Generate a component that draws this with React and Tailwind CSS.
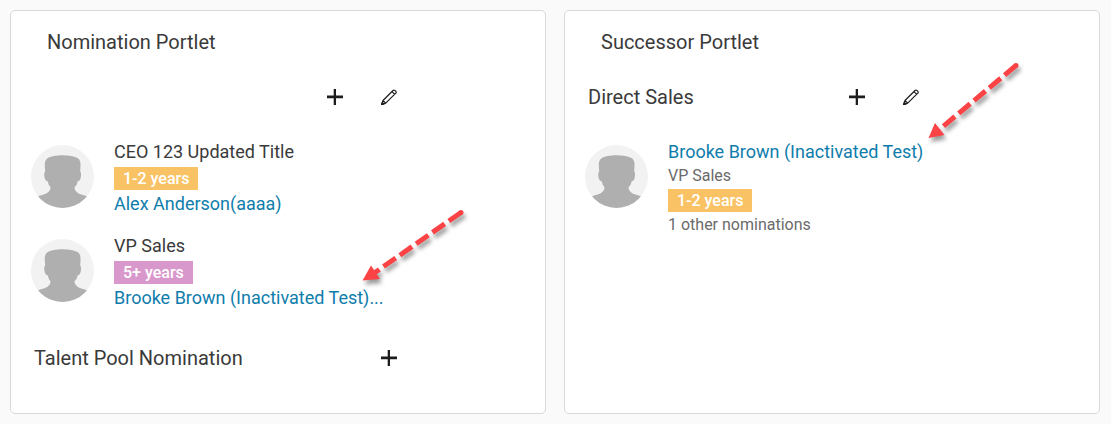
import React from "react";

function Avatar() {
  return (
    <svg viewBox="0 0 63 63" className="mt-1.5 size-[63px] shrink-0" role="img" aria-label="No photo">
      <defs>
        <clipPath id="avatar-circle">
          <circle cx="31.5" cy="31.5" r="31.5" />
        </clipPath>
      </defs>
      <circle cx="31.5" cy="31.5" r="31.5" fill="#f2f2f2" />
      <path
        clipPath="url(#avatar-circle)"
        fill="#afafaf"
        d="M31.500 10.300C25 10.300 19.500 11.300 16.500 13.200C14 15 13.600 18 13.800 21L14.200 26.500C13.200 27.500 13.100 29 13.400 31.500C13.800 34.500 14.800 36.300 16.900 36.500C17.400 39.500 18.300 41 19.500 42L19.300 44C18.500 46.500 16.500 48 14 49C11 50 9 50.300 6.500 51.500L0 63H63L56.500 51.500C54 50.300 52 50 49 49C46.500 48 44.500 46.500 43.700 44L43.500 42C45 41 46.100 39.500 46.500 36.500C48.500 36.300 49.500 34.500 49.900 31.500C50.200 29 50.100 27.500 49.200 26.500L49.500 21C49.700 18 49.300 15 47 13.200C43.500 11.300 38 10.300 31.500 10.300Z"
      />
    </svg>
  );
}

function AddButton({ label }) {
  return (
    <button type="button" aria-label={label} className="flex size-8 items-center justify-center">
      <svg viewBox="0 0 16 16" className="size-4" fill="#1d1d1d" aria-hidden="true">
        <path d="M6.700 0h2.300v6.600H16v2.700H9V16H6.700V9.300H0V6.600h6.700z" />
      </svg>
    </button>
  );
}

function EditButton({ label }) {
  return (
    <button type="button" aria-label={label} className="flex size-8 items-center justify-center">
      <svg viewBox="0 0 16 16" className="size-4" fill="none" stroke="#1d1d1d" strokeWidth="1.2" strokeLinejoin="round" aria-hidden="true">
        <path d="M2 11.500L12 1.500Q12.900 .6 13.800 1.400L14.800 2.300Q15.700 3.200 14.800 4.100L4.700 14.100L.8 15.500ZM10.900 2.600L13.700 5.200M2 11.500L4.700 14.100" />
        <path d="M1.300 13.400L.5 15.700L3 14.900Z" fill="#1d1d1d" />
      </svg>
    </button>
  );
}

function Badge({ tone, children }) {
  return (
    <span className={`h-[23px] px-[9px] text-base leading-[23px] font-medium text-white ${tone}`}>
      {children}
    </span>
  );
}

function PersonLink({ children }) {
  return (
    <a href="#profile" className="text-lg leading-[26px] whitespace-nowrap text-[#0f7dac]">
      {children}
    </a>
  );
}

function Person({ children }) {
  return (
    <li className="flex gap-5">
      <Avatar />
      <div className="flex flex-col items-start">{children}</div>
    </li>
  );
}

function Card({ title, children }) {
  return (
    <section className="relative rounded-[5px] border border-[#d9d9d9] bg-white px-5 pt-[19px] pb-[39px]">
      <h2 className="pl-4 text-xl leading-6">{title}</h2>
      {children}
    </section>
  );
}

function Arrow({ className, line, head, width, height }) {
  return (
    <svg
      className={`pointer-events-none absolute overflow-visible drop-shadow-[2px_4px_2px_rgba(0,0,0,0.4)] ${className}`}
      width={width}
      height={height}
      viewBox={`0 0 ${width} ${height}`}
      aria-hidden="true"
    >
      <path d={line} stroke="#fb4345" strokeWidth="5" strokeDasharray="14.900 5" fill="none" />
      <circle cx={width - 3} cy="3.500" r="2.500" fill="#fb4345" />
      <path d={head} fill="#fb4345" />
    </svg>
  );
}

export default function App() {
  return (
    <main className="grid min-h-screen grid-cols-2 gap-[18px] bg-[#fafafa] py-[10px] pr-[11px] pl-[10px] font-[Roboto,sans-serif] text-[#3a3a3a]">
      <Card title="Nomination Portlet">
        <div className="mt-[27px] flex max-w-[374px] justify-end gap-[22px]">
          <AddButton label="Add nomination" />
          <EditButton label="Edit nominations" />
        </div>
        <ul className="mt-[26px] flex flex-col gap-4">
          <Person>
            <span className="text-lg leading-[26px]">CEO 123 Updated Title</span>
            <div className="mt-0.5 mb-px flex"><Badge tone="bg-[#f9c365]">1-2 years</Badge></div>
            <PersonLink>Alex Anderson(aaaa)</PersonLink>
          </Person>
          <Person>
            <span className="text-lg leading-[26px]">VP Sales</span>
            <div className="mt-0.5 mb-px flex"><Badge tone="bg-[#d998cb]">5+ years</Badge></div>
            <PersonLink>Brooke Brown (Inactivated Test)...</PersonLink>
          </Person>
        </ul>
        <div className="mt-[31px] flex max-w-[374px] items-center justify-between pl-[3px]">
          <h3 className="text-xl leading-6">Talent Pool Nomination</h3>
          <AddButton label="Add talent pool nomination" />
        </div>
        <Arrow
          className="top-[198px] left-[351px]"
          width={102}
          height={73}
          line="M99 3.500L13 63.500"
          head="M.5 71.500L9 56.500L18 70Z"
        />
      </Card>

      <Card title="Successor Portlet">
        <div className="mt-[27px] flex max-w-[342px] items-center justify-between pl-[3px]">
          <h3 className="text-xl leading-6">Direct Sales</h3>
          <div className="flex gap-[22px]">
            <AddButton label="Add successor" />
            <EditButton label="Edit successors" />
          </div>
        </div>
        <ul className="mt-[26px]">
          <Person>
            <PersonLink>Brooke Brown (Inactivated Test)</PersonLink>
            <span className="text-base leading-[22px] text-[#6a6a6a]">VP Sales</span>
            <div className="mt-0.5 mb-px flex"><Badge tone="bg-[#f9c365]">1-2 years</Badge></div>
            <span className="text-base leading-6 text-[#6a6a6a]">1 other nominations</span>
          </Person>
        </ul>
        <Arrow
          className="top-[51px] left-[363px]"
          width={91}
          height={77}
          line="M88 3.500L12 67"
          head="M.5 76L7 61L16.500 73Z"
        />
      </Card>
    </main>
  );
}
